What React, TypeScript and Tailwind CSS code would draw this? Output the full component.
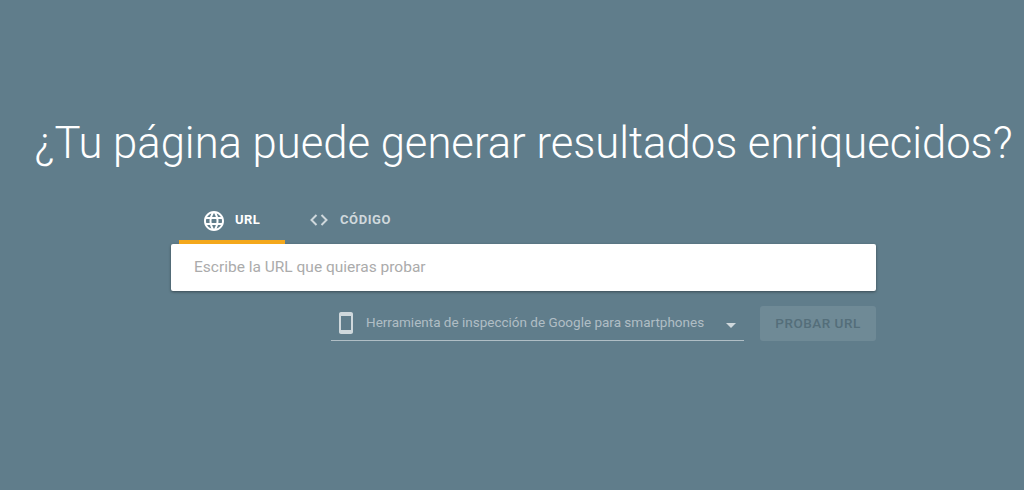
function Globe() {
  return (
    <svg viewBox="0 0 24 24" className="w-[24px] h-[24px]" fill="#fff">
      <path d="M11.99 2C6.47 2 2 6.48 2 12s4.47 10 9.99 10C17.52 22 22 17.52 22 12S17.52 2 11.99 2zm6.93 6h-2.95c-.32-1.25-.78-2.45-1.38-3.56 1.84.63 3.37 1.91 4.33 3.56zM12 4.04c.83 1.2 1.48 2.53 1.91 3.96h-3.82c.43-1.43 1.08-2.76 1.91-3.96zM4.26 14C4.1 13.36 4 12.69 4 12s.1-1.36.26-2h3.38c-.08.66-.14 1.32-.14 2s.06 1.34.14 2H4.26zm.82 2h2.95c.32 1.25.78 2.45 1.38 3.56-1.84-.63-3.37-1.9-4.33-3.56zm2.95-8H5.08c.96-1.66 2.49-2.93 4.33-3.56C8.81 5.55 8.35 6.75 8.03 8zM12 19.96c-.83-1.2-1.48-2.53-1.91-3.96h3.82c-.43 1.43-1.08 2.76-1.91 3.96zM14.34 14H9.66c-.09-.66-.16-1.32-.16-2s.07-1.35.16-2h4.68c.09.65.16 1.32.16 2s-.07 1.34-.16 2zm.25 5.56c.6-1.11 1.06-2.31 1.38-3.56h2.95c-.96 1.65-2.49 2.93-4.33 3.56zM16.36 14c.08-.66.14-1.32.14-2s-.06-1.34-.14-2h3.38c.16.64.26 1.31.26 2s-.1 1.36-.26 2h-3.38z" />
    </svg>
  );
}

function CodeIcon() {
  return (
    <svg viewBox="0 0 24 24" className="w-[24px] h-[24px]" fill="none" stroke="#cfd8dc" strokeWidth="2">
      <path d="M9.5 7 4.5 12 9.5 17" />
      <path d="M14.5 7 19.5 12 14.5 17" />
    </svg>
  );
}

function Phone() {
  return (
    <svg viewBox="0 0 24 24" className="w-[24px] h-[24px]" fill="#cfd8dc">
      <path d="M17 1H7C5.9 1 5 1.9 5 3v18c0 1.1.9 2 2 2h10c1.1 0 2-.9 2-2V3c0-1.1-.9-2-2-2zm0 18H7V5h10v14z" />
    </svg>
  );
}

export default function App() {
  return (
    <div className="w-[1024px] h-[490px] bg-[#607d8b] overflow-hidden font-['Roboto',sans-serif] flex flex-col items-center pl-[23px]">
      <h1 className="mt-[118px] h-[52px] leading-[52px] text-[43.6px] font-light text-white whitespace-nowrap text-center">
        ¿Tu página puede generar resultados enriquecidos?
      </h1>
      <div className="mt-[26px] w-[705px]">
        <div className="flex h-[48px] ml-[8px]">
          <div className="w-[106px] h-[48px] border-b-[4px] border-[#f4a81c] flex items-center gap-[9px] pl-[23px] pt-[6px] text-[13px] font-bold text-white tracking-[0.4px]">
            <Globe />
            <span className="-mt-[2px]">URL</span>
          </div>
          <div className="h-[48px] flex items-center gap-[9px] pl-[22px] text-[13px] font-bold text-[#cfd8dc] tracking-[0.6px]">
            <CodeIcon />
            <span>CÓDIGO</span>
          </div>
        </div>
        <div className="h-[47px] bg-white rounded-[2px] shadow-[0_1px_3px_rgba(0,0,0,0.4)] flex items-center pl-[23px] text-[15.5px] text-[#ababab]">
          Escribe la URL que quieras probar
        </div>
        <div className="mt-[15px] flex justify-end gap-[16px]">
          <div className="w-[413px] h-[35px] border-b border-[#b0bec5] flex items-center pl-[3px]">
            <Phone />
            <span className="ml-[8px] -mt-[2px] text-[13.5px] text-[#b0bec5] whitespace-nowrap">
              Herramienta de inspección de Google para smartphones
            </span>
            <span className="ml-[22px] w-0 h-0 border-x-[5px] border-x-transparent border-t-[5px] border-t-[#cfd8dc] mt-[5px]" />
          </div>
          <div className="w-[116px] h-[35px] rounded-[3px] bg-[#6f8a96] flex items-center justify-center text-[13.5px] font-medium tracking-[0.5px] text-[#546e7a]">
            PROBAR URL
          </div>
        </div>
      </div>
    </div>
  );
}
